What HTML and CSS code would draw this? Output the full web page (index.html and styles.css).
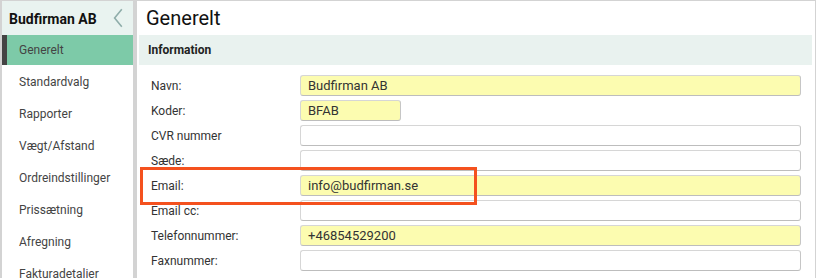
FILE: index.html
```html
<!DOCTYPE html>
<html lang="da">
<head>
<meta charset="utf-8">
<title>Generelt</title>
<link rel="stylesheet" href="styles.css">
</head>
<body>
<div class="app">
  <aside class="sidebar">
    <div class="side-head">
      <span class="company">Budfirman AB</span>
      <svg class="collapse" width="10" height="20" viewBox="0 0 10 20"><path d="M8.8 1.2 L1.6 10 L8.8 18.8" fill="none" stroke="#8fadaa" stroke-width="1.6"/></svg>
    </div>
    <nav class="nav">
      <div class="nav-item active">Generelt</div>
      <div class="nav-item">Standardvalg</div>
      <div class="nav-item">Rapporter</div>
      <div class="nav-item">Vægt/Afstand</div>
      <div class="nav-item">Ordreindstillinger</div>
      <div class="nav-item">Prissætning</div>
      <div class="nav-item">Afregning</div>
      <div class="nav-item">Fakturadetalier</div>
    </nav>
  </aside>
  <main class="main">
    <h1 class="title">Generelt</h1>
    <div class="section-head">Information</div>
    <div class="form">
      <label class="lbl">Navn:</label><div class="field fill">Budfirman AB</div>
      <label class="lbl">Koder:</label><div class="field fill short">BFAB</div>
      <label class="lbl">CVR nummer</label><div class="field"></div>
      <label class="lbl">Sæde:</label><div class="field"></div>
      <label class="lbl">Email:</label><div class="field fill">info@budfirman.se</div>
      <label class="lbl">Email cc:</label><div class="field"></div>
      <label class="lbl">Telefonnummer:</label><div class="field fill">+46854529200</div>
      <label class="lbl">Faxnummer:</label><div class="field"></div>
    </div>
  </main>
  <div class="highlight"></div>
</div>
</body>
</html>
```
FILE: styles.css
```css
* { box-sizing: border-box; }
html, body { margin: 0; padding: 0; }
body {
  font-family: Roboto, "Liberation Sans", sans-serif;
  color: #333;
  background: #d3d3d3;
  overflow: hidden;
}
.app {
  position: relative;
  display: flex;
  gap: 4px;
  height: 278px;
  padding: 1px 1px 0 2px;
  background: #d3d3d3;
}
.sidebar {
  width: 131px;
  flex: none;
  background: #fff;
}
.side-head {
  height: 34px;
  background: #e9f3f0;
  display: flex;
  align-items: center;
  justify-content: space-between;
  padding: 2px 10px 0 7px;
}
.company {
  font-size: 14px;
  font-weight: 700;
  color: #111;
}
.collapse { display: block; margin-top: -3px; }
.nav-item {
  height: 30px;
  margin-bottom: 2px;
  display: flex;
  align-items: center;
  padding-left: 17px;
  font-size: 12px;
  color: #444;
}
.nav-item.active {
  background: #7dcaa8;
  border-left: 5px solid #444;
  padding-left: 12px;
}
.main {
  flex: 1;
  background: #fff;
  padding: 0 3px 0 2px;
}
.title {
  margin: 0;
  height: 34px;
  padding: 5px 0 0 7px;
  font-size: 20px;
  font-weight: 400;
  color: #111;
  line-height: 24px;
}
.section-head {
  height: 30px;
  background: #e9f2ef;
  font-size: 12px;
  font-weight: 700;
  color: #222;
  padding-left: 9px;
  display: flex;
  align-items: center;
}
.form {
  display: grid;
  grid-template-columns: 149px 501px;
  row-gap: 4px;
  padding: 10px 0 0 12px;
}
.lbl {
  font-size: 12px;
  color: #333;
  display: flex;
  align-items: center;
  height: 21px;
}
.field {
  height: 21px;
  border: 1px solid #d6d6d6;
  border-bottom-color: #bdbdbd;
  border-right-color: #c6c6c6;
  border-radius: 3px;
  background: #fff;
  font-size: 13px;
  color: #333;
  padding-left: 7px;
  line-height: 19px;
}
.field.fill { background: #fcfcb0; }
.field.short { width: 101px; }
.highlight {
  position: absolute;
  left: 140px;
  top: 167px;
  width: 337px;
  height: 38px;
  border: 3px solid #f4511e;
}
```
